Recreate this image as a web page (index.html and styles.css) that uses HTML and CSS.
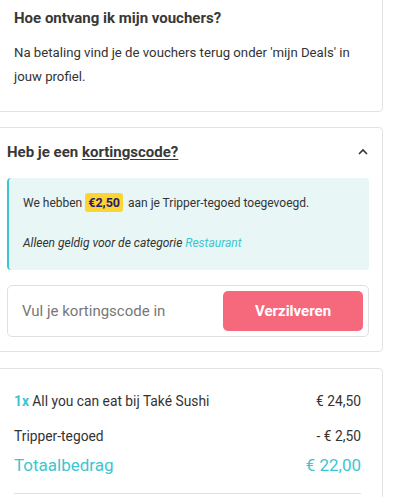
FILE: index.html
```html
<!DOCTYPE html>
<html lang="nl">
<head>
    <meta charset="UTF-8">
    <meta name="viewport" content="width=device-width, initial-scale=1.0">
    <title>Afrekenen</title>
    <link rel="stylesheet" href="styles.css">
</head>
<body>
    <div class="cards">
        <div class="card faq">
            <h3>Hoe ontvang ik mijn vouchers?</h3>
            <p>Na betaling vind je de vouchers terug onder 'mijn Deals' in jouw profiel.</p>
        </div>

        <div class="card coupon">
            <div class="coupon-head">
                <h3>Heb je een <u>kortingscode?</u></h3>
                <svg class="chevron" width="12" height="8" viewBox="0 0 12 8">
                    <path d="M2 6 L6 2 L10 6" fill="none" stroke="#333" stroke-width="1.6"/>
                </svg>
            </div>
            <div class="notice">
                <p>We hebben <span class="badge">€2,50</span> aan je Tripper-tegoed toegevoegd.</p>
                <p class="note">Alleen geldig voor de categorie <a href="#">Restaurant</a></p>
            </div>
            <div class="code-form">
                <input type="text" placeholder="Vul je kortingscode in">
                <button>Verzilveren</button>
            </div>
        </div>

        <div class="card summary">
            <div class="row">
                <span><b class="qty">1x</b> All you can eat bij Také Sushi</span>
                <span>€ 24,50</span>
            </div>
            <div class="row credit">
                <span>Tripper-tegoed</span>
                <span>- € 2,50</span>
            </div>
            <div class="row total">
                <span>Totaalbedrag</span>
                <span>€ 22,00</span>
            </div>
            <div class="divider"></div>
        </div>
    </div>
</body>
</html>
```

FILE: styles.css
```css
body {
    font-family: Roboto, "Noto Sans", Arial, sans-serif;
    margin: 0;
    background: #fff;
    color: #333;
    overflow: hidden;
}

.cards {
    margin-left: -10px;
    width: 393px;
}

.card {
    border: 1px solid #e2e2e2;
    border-radius: 4px;
    background: #fff;
    box-sizing: border-box;
}

h3 {
    margin: 0;
    font-size: 15px;
    line-height: 24px;
    font-weight: bold;
    color: #383838;
}

.faq {
    margin-top: -10px;
    padding: 15px 14px 22px 23px;
}

.faq p {
    margin: 11px 0 0;
    font-size: 13.2px;
    line-height: 24px;
}

.coupon {
    margin-top: 15px;
    padding: 12px 13px 14px 16px;
}

.coupon-head {
    display: flex;
    justify-content: space-between;
    align-items: center;
}

.coupon-head u {
    text-underline-offset: 2px;
}

.notice {
    margin-top: 14px;
    background: #e8f6f6;
    border-left: 2px solid #3cc6d1;
    border-radius: 4px;
    padding: 15px 14px 17px;
}

.notice p {
    margin: 0;
    font-size: 12px;
    line-height: 20px;
}

.notice .note {
    margin-top: 20px;
    font-style: italic;
}

.notice a {
    color: #3cc6d1;
    text-decoration: none;
}

.badge {
    background: #fcd535;
    color: #2b1b6b;
    font-weight: bold;
    font-size: 12.5px;
    border-radius: 3px;
    padding: 2px 3px;
    margin-right: 2px;
}

.code-form {
    margin-top: 15px;
    display: flex;
    align-items: center;
    border: 1px solid #e0e0e0;
    border-radius: 5px;
    padding: 5px 5px 5px 14px;
}

.code-form input {
    flex: 1;
    border: none;
    outline: none;
    font-family: inherit;
    font-size: 15px;
    color: #333;
    padding: 0;
    min-width: 0;
}

.code-form input::placeholder {
    color: #777;
}

.code-form button {
    width: 140px;
    height: 40px;
    border: none;
    border-radius: 5px;
    background: #f6697d;
    color: #fff;
    font-family: inherit;
    font-size: 15px;
    font-weight: bold;
}

.summary {
    margin-top: 16px;
    padding: 22px 21px 0 23px;
}

.row {
    display: flex;
    justify-content: space-between;
    font-size: 13.8px;
    line-height: 20px;
}

.qty {
    color: #3cc6d1;
}

.credit {
    margin-top: 15px;
}

.total {
    margin-top: 7px;
    font-size: 17px;
    line-height: 24px;
    color: #3cc6d1;
}

.divider {
    margin-top: 16px;
    border-top: 1px solid #e2e2e2;
    height: 40px;
}
```
